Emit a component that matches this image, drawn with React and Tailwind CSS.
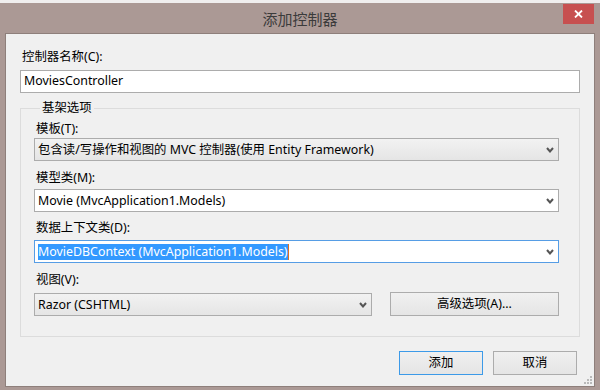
import React from 'react';

const font = { fontFamily: '"Noto Sans", "Noto Sans CJK SC", sans-serif' };

function Chevron() {
  return (
    <svg width="8" height="6" viewBox="0 0 8 6" className="shrink-0">
      <polyline points="1,1 4,4.5 7,1" fill="none" stroke="#555" strokeWidth="2" />
    </svg>
  );
}

function Combo({ children, white, focus, className = '' }) {
  const look = focus
    ? 'bg-white border-[#569de5]'
    : white
    ? 'bg-white border-[#acacac]'
    : 'bg-gradient-to-b from-[#f2f2f2] to-[#e5e5e5] border-[#acacac]';
  return (
    <div className={`h-[23px] border flex items-center pl-[3px] pr-[4px] text-black ${look} ${className}`}>
      <div className="flex-1 truncate leading-[16px]">{children}</div>
      <Chevron />
    </div>
  );
}

function Btn({ children, primary, className = '' }) {
  return (
    <button
      className={`h-[24px] border bg-gradient-to-b from-[#f0f0f0] to-[#e5e5e5] text-black leading-[16px] ${
        primary ? 'border-[#3c9ae8]' : 'border-[#acacac]'
      } ${className}`}
    >
      {children}
    </button>
  );
}

const App = () => {
  return (
    <div className="w-[600px] h-[390px] bg-[#ab9995] flex flex-col text-[12.4px]" style={font}>
      {/* top strip */}
      <div className="h-[3px] bg-[#f0eeee]" />

      {/* title bar */}
      <div className="h-[30px] relative flex items-center justify-center">
        <span className="text-[15px] text-[#3b3b3b] leading-[20px] mt-[1px]">添加控制器</span>
        <div className="absolute top-[1px] right-[6px] w-[31px] h-[20px] bg-[#c75050] flex items-center justify-center">
          <svg width="9" height="8" viewBox="0 0 9 8">
            <path d="M1 0.5 L8 7.5 M8 0.5 L1 7.5" stroke="#fff" strokeWidth="1.8" />
          </svg>
        </div>
      </div>

      {/* client area */}
      <div className="relative mx-[5px] mb-[3px] flex-1 bg-[#f0f0f0] border border-[#8e7f7b] px-[14px] flex flex-col">
        <div className="mt-[15px] ml-[2px] h-[16px] leading-[16px] text-black">控制器名称(C):</div>
        <div className="mt-[5px] h-[23px] bg-white border border-[#acacac] flex items-center pl-[3px] text-black">
          MoviesController
        </div>

        <fieldset className="mt-[7px] border border-[#dcdcdc] pl-[13px] pr-[20px] pb-[20px] pt-[5px]">
          <legend className="ml-[6px] px-[2px] leading-[16px] text-black">基架选项</legend>

          <div className="ml-[2px] h-[16px] leading-[16px]">模板(T):</div>
          <Combo className="mt-[1px]">包含读/写操作和视图的 MVC 控制器(使用 Entity Framework)</Combo>

          <div className="mt-[9px] ml-[2px] h-[16px] leading-[16px]">模型类(M):</div>
          <Combo white className="mt-[3px]">Movie (MvcApplication1.Models)</Combo>

          <div className="mt-[8px] ml-[2px] h-[16px] leading-[16px]">数据上下文类(D):</div>
          <Combo focus className="mt-[4px]">
            <span className="bg-[#3399ff] text-white border-r border-[#e07020] py-[1px]">
              MovieDBContext (MvcApplication1.Models)
            </span>
          </Combo>

          <div className="mt-[9px] ml-[2px] h-[16px] leading-[16px]">视图(V):</div>
          <div className="mt-[4px] flex items-end gap-[18px]">
            <Combo className="w-[338px]">Razor (CSHTML)</Combo>
            <Btn className="flex-1">高级选项(A)...</Btn>
          </div>
        </fieldset>

        <div className="mt-[14px] flex justify-end gap-[10px] pr-[3px]">
          <Btn primary className="w-[84px]">添加</Btn>
          <Btn className="w-[84px]">取消</Btn>
        </div>

        {/* size grip */}
        <svg className="absolute right-[1px] bottom-[1px]" width="10" height="10" viewBox="0 0 10 10">
          {[
            [7, 1],
            [4, 4], [7, 4],
            [1, 7], [4, 7], [7, 7],
          ].map(([x, y]) => (
            <rect key={`${x}-${y}`} x={x} y={y} width="2" height="2" fill="#b9b9b9" />
          ))}
        </svg>
      </div>
    </div>
  );
};

export default App;
